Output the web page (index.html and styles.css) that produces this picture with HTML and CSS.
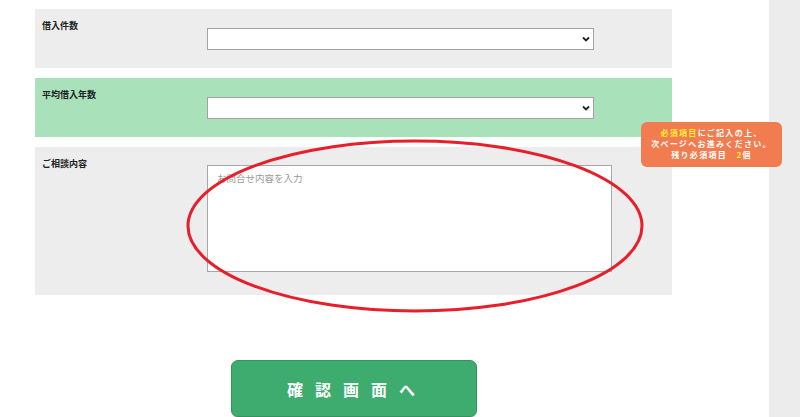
FILE: index.html
```html
<!DOCTYPE html>
<html lang="ja">
<head>
    <meta charset="UTF-8">
    <meta name="viewport" content="width=device-width, initial-scale=1.0">
    <title>お問い合わせフォーム</title>
    <link rel="stylesheet" href="styles.css">
</head>
<body>
    <div class="page">
        <main class="main">
            <form class="form" id="contactForm">
                <div class="form-row">
                    <label class="form-label" for="loanCount">借入件数</label>
                    <div class="select-wrap">
                        <select class="form-select" id="loanCount">
                            <option value=""></option>
                            <option>1件</option>
                            <option>2件</option>
                            <option>3件以上</option>
                        </select>
                        <svg class="select-arrow" width="8" height="6" viewBox="0 0 8 6"><path d="M1 1.5 L4 4.5 L7 1.5" fill="none" stroke="#222" stroke-width="1.8"/></svg>
                    </div>
                </div>

                <div class="form-row form-row-required">
                    <label class="form-label" for="loanYears">平均借入年数</label>
                    <div class="select-wrap">
                        <select class="form-select" id="loanYears">
                            <option value=""></option>
                            <option>1年未満</option>
                            <option>1〜3年</option>
                            <option>3年以上</option>
                        </select>
                        <svg class="select-arrow" width="8" height="6" viewBox="0 0 8 6"><path d="M1 1.5 L4 4.5 L7 1.5" fill="none" stroke="#222" stroke-width="1.8"/></svg>
                    </div>
                </div>

                <div class="form-row form-row-tall">
                    <label class="form-label" for="message">ご相談内容</label>
                    <textarea class="form-textarea" id="message" placeholder="お問合せ内容を入力"></textarea>
                </div>

                <div class="form-actions">
                    <button class="submit-button" type="submit">確認画面へ</button>
                </div>
            </form>

            <svg class="highlight-ring" width="470" height="180" viewBox="0 0 470 180">
                <ellipse cx="229" cy="87" rx="227" ry="85" fill="none" stroke="#e71f2a" stroke-width="3"/>
            </svg>

            <div class="required-notice">
                <p><span class="notice-em">必須項目</span>にご記入の上、</p>
                <p>次ページへお進みください。</p>
                <p>残り必須項目　<span class="notice-em">2</span>個</p>
            </div>
        </main>
        <aside class="sidebar"></aside>
    </div>
</body>
</html>
```

FILE: styles.css
```css
* {
    box-sizing: border-box;
}
body {
    margin: 0;
    font-family: "Noto Sans CJK JP", "Noto Sans", sans-serif;
    background: #fff;
    color: #222;
    overflow: hidden;
}
.page {
    display: flex;
    height: 417px;
}
.main {
    position: relative;
    width: 769px;
    padding: 9px 0 0 35px;
}
.sidebar {
    flex: 1;
    background: #ececec;
}
.form {
    width: 637px;
    display: flex;
    flex-direction: column;
    gap: 10px;
}
.form-row {
    display: flex;
    align-items: flex-start;
    background: #ededed;
    height: 59px;
    padding: 19px 0 0 7px;
}
.form-row-required {
    background: #a9e1bb;
}
.form-row-tall {
    height: 148px;
    padding-top: 18px;
}
.form-label {
    width: 165px;
    margin-top: -9px;
    font-size: 9px;
    font-weight: bold;
    line-height: 14px;
    color: #222;
}
.form-row-tall .form-label {
    margin-top: -8px;
}
.select-wrap {
    position: relative;
    width: 387px;
    height: 22px;
}
.form-select {
    display: block;
    appearance: none;
    -webkit-appearance: none;
    width: 100%;
    height: 100%;
    margin: 0;
    border: 1px solid #a3a3a3;
    border-radius: 0;
    background: #fff;
    font-size: 11px;
    font-family: inherit;
    padding: 0 20px 0 6px;
}
.select-arrow {
    position: absolute;
    right: 4px;
    top: 8px;
    pointer-events: none;
}
.form-textarea {
    display: block;
    margin: 0;
    width: 405px;
    height: 107px;
    border: 1px solid #a8a8a8;
    border-radius: 0;
    padding: 5px 9px;
    font-size: 9.5px;
    font-family: inherit;
    resize: none;
}
.form-textarea::placeholder {
    color: #9a9a9a;
}
.form-actions {
    margin-top: 55px;
    padding-left: 196px;
}
.submit-button {
    width: 246px;
    height: 57px;
    background: #3eac6f;
    border: 1px solid #37925f;
    border-radius: 7px;
    box-shadow: 0 1px 1px rgba(0, 0, 0, 0.25);
    color: #fff;
    font-family: inherit;
    font-size: 16px;
    font-weight: bold;
    letter-spacing: 12px;
    padding-left: 12px;
    cursor: pointer;
}
.highlight-ring {
    position: absolute;
    left: 186px;
    top: 139px;
    pointer-events: none;
}
.required-notice {
    position: absolute;
    left: 641px;
    top: 122px;
    width: 141px;
    height: 45px;
    padding-top: 5px;
    background: #f17c4f;
    border-radius: 6px;
    text-align: center;
    color: #fff;
    font-size: 8px;
    font-weight: bold;
    letter-spacing: 1.3px;
}
.required-notice p {
    margin: 0;
    line-height: 11px;
}
.notice-em {
    color: #fff033;
}
```
